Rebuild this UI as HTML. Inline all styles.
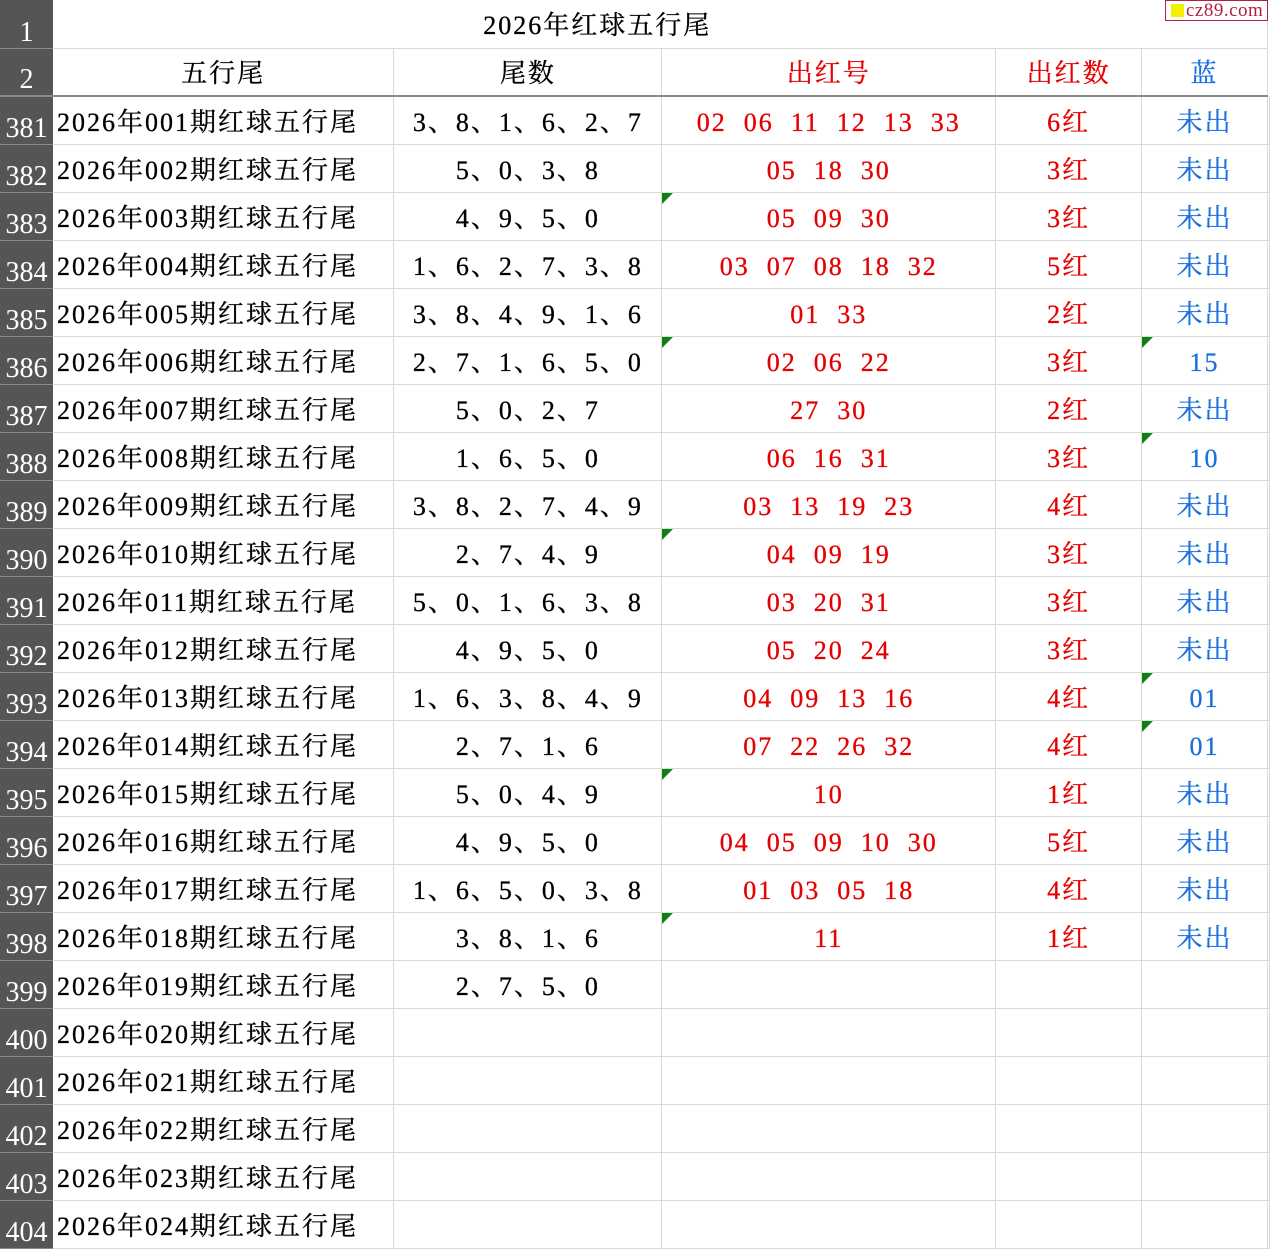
<!DOCTYPE html>
<html><head><meta charset="utf-8"><style>
body{margin:0;width:1270px;height:1235px;overflow:hidden;background:#fff;font-family:"Liberation Serif","Noto Serif CJK SC",serif;}
table{border-collapse:collapse;table-layout:fixed;position:absolute;left:0;top:0;}
td{height:47px;border-bottom:1px solid #d9d9d9;border-right:1px solid #d9d9d9;padding:5px 0 0 0;box-sizing:border-box;font-size:26px;letter-spacing:2px;text-align:center;white-space:pre;position:relative;color:#000;line-height:40px;vertical-align:middle;-webkit-text-stroke:0.3px currentColor}
td.n{background:#555;color:#fff;border-bottom:1px solid #8a8a8a;border-right:none;font-size:28px;letter-spacing:0;vertical-align:bottom;line-height:30px;padding:0;text-align:center;-webkit-text-stroke:0}
td.a{text-align:left;padding-left:4px}
td.r{color:#e60000}
td.b{color:#1a6fe0}
tr.h td{border-bottom:2px solid #8a8a8a}
tr{height:48px}
.t::before{content:"";position:absolute;left:0;top:0;border-top:11px solid #118011;border-right:11px solid transparent}
.logo{position:absolute;left:1165px;top:0;width:103px;height:21px;border:1px solid #b02040;background:#fff;font-size:19px;line-height:20px;color:#b02040;font-family:"Liberation Serif",serif;box-sizing:border-box;letter-spacing:0.5px}
.logo i{display:inline-block;width:13px;height:13px;background:#f0f000;margin:0 2px 0 5px;vertical-align:-1px}
</style></head><body>
<table>
<colgroup><col style="width:53px"><col style="width:341px"><col style="width:268px"><col style="width:334px"><col style="width:146px"><col style="width:126px"><col style="width:2px"></colgroup>
<tr><td class="n">1</td><td colspan="4" style="border-right:none">2026年红球五行尾</td><td></td><td style="border:none"></td></tr>
<tr class="h"><td class="n">2</td><td>五行尾</td><td>尾数</td><td class="r">出红号</td><td class="r">出红数</td><td class="b">蓝</td><td style="border:none"></td></tr>
<tr><td class="n">381</td><td class="a">2026年001期红球五行尾</td><td>3、8、1、6、2、7</td><td class="r">02  06  11  12  13  33</td><td class="r">6红</td><td class="b">未出</td><td></td></tr>
<tr><td class="n">382</td><td class="a">2026年002期红球五行尾</td><td>5、0、3、8</td><td class="r">05  18  30</td><td class="r">3红</td><td class="b">未出</td><td></td></tr>
<tr><td class="n">383</td><td class="a">2026年003期红球五行尾</td><td>4、9、5、0</td><td class="r t">05  09  30</td><td class="r">3红</td><td class="b">未出</td><td></td></tr>
<tr><td class="n">384</td><td class="a">2026年004期红球五行尾</td><td>1、6、2、7、3、8</td><td class="r">03  07  08  18  32</td><td class="r">5红</td><td class="b">未出</td><td></td></tr>
<tr><td class="n">385</td><td class="a">2026年005期红球五行尾</td><td>3、8、4、9、1、6</td><td class="r">01  33</td><td class="r">2红</td><td class="b">未出</td><td></td></tr>
<tr><td class="n">386</td><td class="a">2026年006期红球五行尾</td><td>2、7、1、6、5、0</td><td class="r t">02  06  22</td><td class="r">3红</td><td class="b t">15</td><td></td></tr>
<tr><td class="n">387</td><td class="a">2026年007期红球五行尾</td><td>5、0、2、7</td><td class="r">27  30</td><td class="r">2红</td><td class="b">未出</td><td></td></tr>
<tr><td class="n">388</td><td class="a">2026年008期红球五行尾</td><td>1、6、5、0</td><td class="r">06  16  31</td><td class="r">3红</td><td class="b t">10</td><td></td></tr>
<tr><td class="n">389</td><td class="a">2026年009期红球五行尾</td><td>3、8、2、7、4、9</td><td class="r">03  13  19  23</td><td class="r">4红</td><td class="b">未出</td><td></td></tr>
<tr><td class="n">390</td><td class="a">2026年010期红球五行尾</td><td>2、7、4、9</td><td class="r t">04  09  19</td><td class="r">3红</td><td class="b">未出</td><td></td></tr>
<tr><td class="n">391</td><td class="a">2026年011期红球五行尾</td><td>5、0、1、6、3、8</td><td class="r">03  20  31</td><td class="r">3红</td><td class="b">未出</td><td></td></tr>
<tr><td class="n">392</td><td class="a">2026年012期红球五行尾</td><td>4、9、5、0</td><td class="r">05  20  24</td><td class="r">3红</td><td class="b">未出</td><td></td></tr>
<tr><td class="n">393</td><td class="a">2026年013期红球五行尾</td><td>1、6、3、8、4、9</td><td class="r">04  09  13  16</td><td class="r">4红</td><td class="b t">01</td><td></td></tr>
<tr><td class="n">394</td><td class="a">2026年014期红球五行尾</td><td>2、7、1、6</td><td class="r">07  22  26  32</td><td class="r">4红</td><td class="b t">01</td><td></td></tr>
<tr><td class="n">395</td><td class="a">2026年015期红球五行尾</td><td>5、0、4、9</td><td class="r t">10</td><td class="r">1红</td><td class="b">未出</td><td></td></tr>
<tr><td class="n">396</td><td class="a">2026年016期红球五行尾</td><td>4、9、5、0</td><td class="r">04  05  09  10  30</td><td class="r">5红</td><td class="b">未出</td><td></td></tr>
<tr><td class="n">397</td><td class="a">2026年017期红球五行尾</td><td>1、6、5、0、3、8</td><td class="r">01  03  05  18</td><td class="r">4红</td><td class="b">未出</td><td></td></tr>
<tr><td class="n">398</td><td class="a">2026年018期红球五行尾</td><td>3、8、1、6</td><td class="r t">11</td><td class="r">1红</td><td class="b">未出</td><td></td></tr>
<tr><td class="n">399</td><td class="a">2026年019期红球五行尾</td><td>2、7、5、0</td><td></td><td></td><td></td><td></td></tr>
<tr><td class="n">400</td><td class="a">2026年020期红球五行尾</td><td></td><td></td><td></td><td></td><td></td></tr>
<tr><td class="n">401</td><td class="a">2026年021期红球五行尾</td><td></td><td></td><td></td><td></td><td></td></tr>
<tr><td class="n">402</td><td class="a">2026年022期红球五行尾</td><td></td><td></td><td></td><td></td><td></td></tr>
<tr><td class="n">403</td><td class="a">2026年023期红球五行尾</td><td></td><td></td><td></td><td></td><td></td></tr>
<tr><td class="n">404</td><td class="a">2026年024期红球五行尾</td><td></td><td></td><td></td><td></td><td></td></tr>
</table>
<div class="logo"><i></i>cz89.com</div>
</body></html>
